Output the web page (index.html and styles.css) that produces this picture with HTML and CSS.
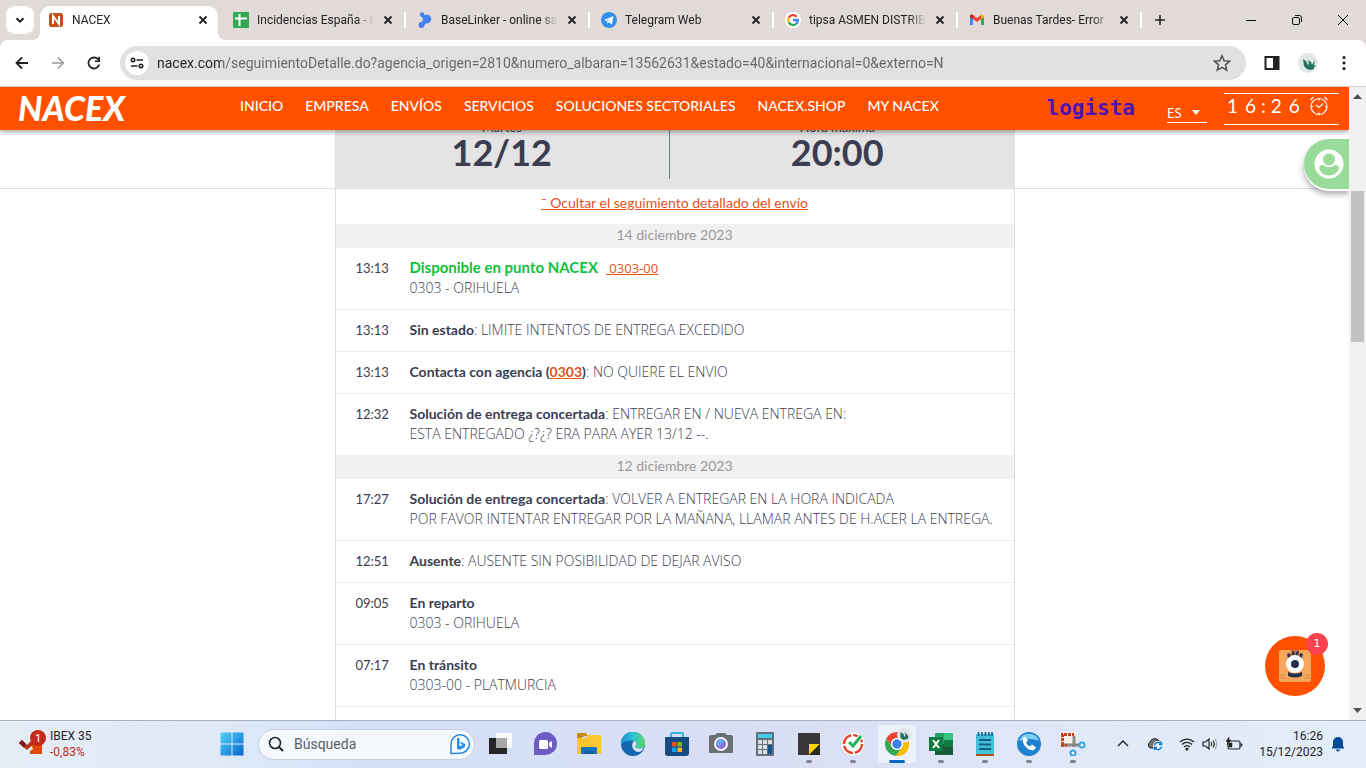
FILE: index.html
```html
<!DOCTYPE html>
<html lang="es">
<head>
<meta charset="utf-8">
<title>NACEX</title>
<link rel="stylesheet" href="styles.css">
</head>
<body>
<header class="tabstrip">
  <button class="tab-search" aria-label="Buscar pestañas"><svg width="12" height="12" viewBox="0 0 12 12"><path d="M2.5 4.2 6 7.7l3.500-3.500" fill="none" stroke="#222" stroke-width="2"/></svg></button>
  <div class="tab active">
    <svg width="16" height="16" viewBox="0 0 16 16"><rect x="1" y="1" width="14" height="14" rx="2.500" fill="#c8511b"/><path d="M5 12V4l6 8V4" fill="none" stroke="#fff" stroke-width="2"/></svg>
    <span class="tab-title">NACEX</span>
    <button class="x" aria-label="Cerrar"><svg width="10" height="10" viewBox="0 0 10 10"><path d="M1.500 1.500l7 7m0-7l-7 7"/></svg></button>
  </div>
  <div class="tab">
    <svg width="16" height="16" viewBox="0 0 16 16"><rect width="16" height="16" rx="1" fill="#34a853"/><path d="M2 6.500h12M6.500 2v12" stroke="#fff" stroke-width="2"/></svg>
    <span class="tab-title">Incidencias España - H</span>
    <button class="x" aria-label="Cerrar"><svg width="10" height="10" viewBox="0 0 10 10"><path d="M1.500 1.500l7 7m0-7l-7 7"/></svg></button>
  </div>
  <div class="tab">
    <svg width="16" height="16" viewBox="0 0 16 16" fill="#4381f0"><circle cx="5" cy="2.500" r="2.200"/><circle cx="10" cy="7" r="4.300"/><circle cx="4.500" cy="13" r="2.900"/><path d="M3.500 3.500 8 9l2-4-4-3zM3 11l5-4 3 3-5 4z"/></svg>
    <span class="tab-title">BaseLinker - online sa</span>
    <button class="x" aria-label="Cerrar"><svg width="10" height="10" viewBox="0 0 10 10"><path d="M1.500 1.500l7 7m0-7l-7 7"/></svg></button>
  </div>
  <div class="tab">
    <svg width="16" height="16" viewBox="0 0 16 16"><circle cx="8" cy="8" r="8" fill="#3390ec"/><path d="M3 8l9.500-4-1.600 8.500-3-2.200-1.500 1.500-.2-2.500L10.500 6 5.500 9z" fill="#fff"/></svg>
    <span class="tab-title">Telegram Web</span>
    <button class="x" aria-label="Cerrar"><svg width="10" height="10" viewBox="0 0 10 10"><path d="M1.500 1.500l7 7m0-7l-7 7"/></svg></button>
  </div>
  <div class="tab">
    <svg width="16" height="16" viewBox="0 0 16 16"><circle cx="8" cy="8" r="8" fill="#fff"/><g fill="none" stroke-width="2.400"><path d="M11.700 4.700A5 5 0 0 0 3.700 5.600" stroke="#ea4335"/><path d="M3.700 5.500a5 5 0 0 0 0 5" stroke="#fbbc05"/><path d="M3.700 10.400a5 5 0 0 0 7.500 1.500" stroke="#34a853"/><path d="M11.200 11.900A4.700 4.700 0 0 0 12.900 8H8" stroke="#4285f4"/></g></svg>
    <span class="tab-title">tipsa ASMEN DISTRIB</span>
    <button class="x" aria-label="Cerrar"><svg width="10" height="10" viewBox="0 0 10 10"><path d="M1.500 1.500l7 7m0-7l-7 7"/></svg></button>
  </div>
  <div class="tab">
    <svg width="16" height="16" viewBox="0 0 16 16"><path d="M1 4v9h3V7z" fill="#4285f4"/><path d="M15 4v9h-3V7z" fill="#34a853"/><path d="M1 4.500C1 2.500 3 2.200 4 3l4 3 4-3v4L8 10 4 7 1 5z" fill="#ea4335"/><path d="M12 3c1-.8 3-.5 3 1.500V5l-3 2.200z" fill="#fbbc04"/><path d="M1 4.500C1 3 2.500 2.300 4 3v4L1 5z" fill="#c5221f"/></svg>
    <span class="tab-title">Buenas Tardes- Error</span>
    <button class="x" aria-label="Cerrar"><svg width="10" height="10" viewBox="0 0 10 10"><path d="M1.500 1.500l7 7m0-7l-7 7"/></svg></button>
  </div>
  <button class="new-tab" aria-label="Nueva pestaña"><svg width="12" height="12" viewBox="0 0 12 12"><path d="M6 1v10M1 6h10" stroke="#222" stroke-width="1.600"/></svg></button>
  <div class="window-controls">
    <button aria-label="Minimizar"><svg width="12" height="12" viewBox="0 0 12 12"><path d="M1 6.500h10"/></svg></button>
    <button aria-label="Restaurar"><svg width="12" height="12" viewBox="0 0 12 12"><rect x="1.500" y="3.500" width="7" height="7" rx="1.500"/><path d="M4 1.500h4.500a2 2 0 0 1 2 2V8"/></svg></button>
    <button aria-label="Cerrar ventana"><svg width="12" height="12" viewBox="0 0 12 12"><path d="M1 1l10 10M11 1L1 11"/></svg></button>
  </div>
</header>
<div class="toolbar-back">
<div class="toolbar">
  <button class="tool" aria-label="Atrás"><svg width="14" height="14" viewBox="0 0 14 14"><path d="M13 7H2M7 1.500 1.500 7 7 12.500" fill="none" stroke="#222" stroke-width="1.800"/></svg></button>
  <button class="tool" aria-label="Adelante"><svg width="14" height="14" viewBox="0 0 14 14"><path d="M1 7h11M7 1.500 12.500 7 7 12.500" fill="none" stroke="#999" stroke-width="1.500"/></svg></button>
  <button class="tool" aria-label="Recargar"><svg width="14" height="14" viewBox="0 0 14 14"><path d="M12.300 8.500A5.500 5.500 0 1 1 11 3.200L12 4.500" fill="none" stroke="#222" stroke-width="1.800"/><path d="M13 .8V6H7.800V4.500h3.500V.8z" fill="#222"/></svg></button>
  <div class="omnibox">
    <button class="site-info" aria-label="Información del sitio"><svg width="14" height="12" viewBox="0 0 14 12" fill="none" stroke="#222" stroke-width="1.600"><circle cx="3" cy="3" r="1.700"/><path d="M6.500 3H13M1 9h6.500"/><circle cx="11" cy="9" r="1.700"/></svg></button>
    <input class="url" type="text" aria-label="Dirección" value="nacex.com/seguimientoDetalle.do?agencia_origen=2810&amp;numero_albaran=13562631&amp;estado=40&amp;internacional=0&amp;externo=N">
    <button class="star" aria-label="Añadir a marcadores"><svg width="18" height="18" viewBox="0 0 16 16"><path d="M8 1.500 9.900 6l4.900.4-3.700 3.200 1.100 4.800L8 11.900l-4.200 2.500 1.100-4.800L1.200 6.400 6.100 6z" fill="none" stroke="#555" stroke-width="1.400"/></svg></button>
  </div>
  <button class="tool-right" aria-label="Panel lateral"><svg width="16" height="16" viewBox="0 0 16 16"><rect x="1.500" y="2" width="13" height="12" fill="none" stroke="#222" stroke-width="2"/><path d="M9 2h6v12H9z" fill="#222"/></svg></button>
  <button class="tool-right" aria-label="Perfil"><svg width="20" height="20" viewBox="0 0 20 20"><circle cx="10" cy="10" r="10" fill="#e1e6e6"/><path d="M5 6l3 2 2 4 1-1-1-4 3 2 1 3 3-5-1 5 2 1-2 1v2l-4 1-3-1-3-3z" fill="#24705a"/></svg></button>
  <button class="tool-right" aria-label="Menú"><svg width="4" height="16" viewBox="0 0 4 16" fill="#222"><circle cx="2" cy="2.500" r="1.600"/><circle cx="2" cy="8" r="1.600"/><circle cx="2" cy="13.500" r="1.600"/></svg></button>
</div>
</div>
<div class="viewport">
  <div class="page">
    <header class="site-header">
      <a class="brand" href="#">NACEX</a>
      <nav class="nav">
        <a href="#">INICIO</a><a href="#">EMPRESA</a><a href="#">ENVÍOS</a><a href="#">SERVICIOS</a><a href="#">SOLUCIONES SECTORIALES</a><a href="#">NACEX.SHOP</a><a href="#">MY NACEX</a>
      </nav>
      <a class="logista" href="#">logista</a>
      <div class="lang">
        <select aria-label="Idioma"><option>ES</option></select>
        <svg width="8" height="5" viewBox="0 0 8 5"><path d="M0 0h8L4 5z" fill="#fff"/></svg>
      </div>
      <div class="clock">
        <span>1</span><span>6</span><span class="colon">:</span><span>2</span><span>6</span>
        <svg width="20" height="20" viewBox="0 0 20 20" fill="none" stroke="#fff" stroke-width="1.200"><circle cx="10" cy="10.500" r="8"/><path d="M7 9l3 2.500 4-4M10 2.500v2M10 16.500v2M2 10.500h2M16 10.500h2M1.500 4 4.500 1M18.500 4l-3-3"/></svg>
      </div>
    </header>
    <main class="main">
      <div class="band">
        <section class="summary">
          <div class="figure"><p>Martes</p><strong>12/12</strong></div>
          <div class="figure"><p>Hora máxima</p><strong>20:00</strong></div>
        </section>
      </div>
      <section class="tracking">
        <p class="toggle"><a href="#">ˉ Ocultar el seguimiento detallado del envío</a></p>
        <table>
          <colgroup><col class="time-col"><col></colgroup>
          <tr class="date"><th colspan="2">14 diciembre 2023</th></tr>
          <tr><td class="time">13:13</td><td><b class="ok">Disponible en punto NACEX</b><a class="point" href="#">&nbsp;0303-00</a><br>0303 - ORIHUELA</td></tr>
          <tr><td class="time">13:13</td><td><b>Sin estado</b>: LIMITE INTENTOS DE ENTREGA EXCEDIDO</td></tr>
          <tr><td class="time">13:13</td><td><b>Contacta con agencia (<a href="#">0303</a>)</b>: NO QUIERE EL ENVIO</td></tr>
          <tr class="last"><td class="time">12:32</td><td><b>Solución de entrega concertada</b>: ENTREGAR EN / NUEVA ENTREGA EN:<br>ESTA ENTREGADO ¿?¿? ERA PARA AYER 13/12 --.</td></tr>
          <tr class="date"><th colspan="2">12 diciembre 2023</th></tr>
          <tr><td class="time">17:27</td><td><b>Solución de entrega concertada</b>: VOLVER A ENTREGAR EN LA HORA INDICADA<br>POR FAVOR INTENTAR ENTREGAR POR LA MAÑANA, LLAMAR ANTES DE H.ACER LA ENTREGA.</td></tr>
          <tr><td class="time">12:51</td><td><b>Ausente</b>: AUSENTE SIN POSIBILIDAD DE DEJAR AVISO</td></tr>
          <tr><td class="time">09:05</td><td><b>En reparto</b><br>0303 - ORIHUELA</td></tr>
          <tr><td class="time">07:17</td><td><b>En tránsito</b><br>0303-00 - PLATMURCIA</td></tr>
        </table>
      </section>
    </main>
    <button class="account" aria-label="Mi cuenta"><svg width="30" height="30" viewBox="0 0 30 30"><circle cx="15" cy="15" r="14.500" fill="#fff"/><circle cx="15" cy="10.500" r="6" fill="#99dc99"/><path d="M5 18.500c2-3 4-2.500 5-2 3 2 7 2 10 0 1-.5 3-1 5 2-1 5-5 8-10 8s-9-3-10-8z" fill="#99dc99"/></svg></button>
    <button class="chat" aria-label="Chat">
      <svg width="34" height="34" viewBox="0 0 34 34"><rect x="1" y="1" width="32" height="32" rx="2" fill="#f6a75b"/><path d="M13 1h8v7h-8z" fill="#b9783a"/><path d="M9 5l3-1 1 4-3 1zM14 3l2-1 1 4h-3zM18 3l3-1-1 4h-2zM22 4l3 1-1 4-3-1z" fill="#34344e"/><circle cx="17" cy="15" r="9" fill="#fff"/><circle cx="17" cy="15" r="4" fill="#27304a"/><path d="M10 23q7 3 14 0v4q-7 3-14 0z" fill="#27304a"/><path d="M2 26h5M2 29h6M27 26h5M26 29h6" stroke="#d28a4a"/></svg>
      <span class="count">1</span>
    </button>
  </div>
  <div class="scrollbar">
    <svg width="9" height="5" viewBox="0 0 9 5"><path d="M0 5h9L4.500 0z" fill="#505050"/></svg>
    <div class="track"><div class="thumb"></div></div>
    <svg width="9" height="5" viewBox="0 0 9 5"><path d="M0 0h9L4.500 5z" fill="#505050"/></svg>
  </div>
</div>
<footer class="taskbar">
  <button class="widget">
    <svg width="28" height="28" viewBox="0 0 28 28"><path d="M12 12h12v12H12v-3l3-2z" fill="#e14a05"/><path d="M1 13l3-3 5 5 8-8 2 4-10 9z" fill="#b8330f"/><path d="M1 13l3-3 4 4-2 4z" fill="#7c1b12"/><circle cx="20" cy="8" r="8" fill="#c42b1c"/><text x="20" y="12" text-anchor="middle" font-size="11" fill="#fff">1</text></svg>
    <span class="quote"><span>IBEX 35</span><span class="down">-0,83%</span></span>
  </button>
  <div class="apps">
    <button class="app start" aria-label="Inicio"><svg width="24" height="24" viewBox="0 0 24 24"><defs><linearGradient id="w" x1="0" y1="0" x2="1" y2="1"><stop offset="0" stop-color="#58cffb"/><stop offset="1" stop-color="#0467cb"/></linearGradient></defs><path d="M.5.5h11v11H.5zM12.500.5h11v11h-11zM.5 12.500h11v11H.5zM12.500 12.500h11v11h-11z" fill="url(#w)"/></svg></button>
    <label class="search">
      <svg width="16" height="16" viewBox="0 0 16 16" fill="none" stroke="#222"><circle cx="7" cy="7" r="5.500" stroke-width="1.600"/><path d="M11 11l4 4" stroke-width="2"/></svg>
      <input type="text" placeholder="Búsqueda" aria-label="Búsqueda">
      <svg width="22" height="22" viewBox="0 0 22 22"><path d="M2 20.500V11a9.200 9.200 0 1 1 9 9.200z" fill="#f8fcff" stroke="#2a86dd" stroke-width="1.500"/><path d="M8 4.500l2.500 1v8l3-1.500-1.500-1-.8-2.500 4.800 2.500v3L10.500 17 8 15.500z" fill="#2590ea"/></svg>
    </label>
    <button class="app" aria-label="Vista de tareas"><svg width="24" height="24" viewBox="0 0 24 24"><rect x="0" y="6" width="18" height="16" fill="#262626"/><rect x="7" y="1" width="16" height="15" fill="#fafafa"/><rect x="7" y="6" width="11" height="10" fill="#a8a8a8"/></svg></button>
    <button class="app" aria-label="Chat de Teams"><svg width="24" height="24" viewBox="0 0 24 24"><path d="M1 23V12A11.500 11.500 0 1 1 12 23z" fill="#6a5cc2"/><rect x="6" y="8" width="9" height="9" rx="1.500" fill="#fff"/><path d="M16 11l3-2v7l-3-2z" fill="#fff"/></svg></button>
    <button class="app" aria-label="Explorador"><svg width="24" height="24" viewBox="0 0 24 24"><path d="M0 2q0-1 1-1h8l2 3h-3l-8 4z" fill="#c98a10"/><path d="M0 6h9l2-3h12q1 0 1 1v18H0z" fill="#fbc62e"/><path d="M4 22v-6q0-1 1-1h14q1 0 1 1v6z" fill="#1474bd"/><path d="M7 19h10v3H7z" fill="#0d5f9f"/></svg></button>
    <button class="app" aria-label="Edge"><svg width="24" height="24" viewBox="0 0 24 24"><defs><linearGradient id="e" x1="0" y1="0" x2="1" y2="0"><stop offset="0" stop-color="#1d8fd8"/><stop offset=".5" stop-color="#2fc0d8"/><stop offset="1" stop-color="#61d960"/></linearGradient></defs><circle cx="12" cy="12" r="12" fill="#1464ae"/><path d="M0 12a12 12 0 0 1 24-1c0 4-3 5.500-6 5.500-3 0-4-1-4-2 2-2 1-6-4-6-5 0-10 3-10 5z" fill="url(#e)"/><path d="M13 9c3 1 3 4 1 5.500 0 2 5 3 9 .5-1 3-3 5-6 5-5-1-8-7-4-11z" fill="#dbe1f4"/></svg></button>
    <button class="app" aria-label="Microsoft Store"><svg width="24" height="24" viewBox="0 0 24 24"><path d="M6 6V2q0-1 1-1h10q1 0 1 1v4" fill="none" stroke="#2fb3e8" stroke-width="2"/><path d="M0 5h24v16q0 3-3 3H3q-3 0-3-3z" fill="#174a83"/><path d="M7 10h4.500v4.500H7z" fill="#f25022"/><path d="M12.500 10H17v4.500h-4.500z" fill="#7fba00"/><path d="M7 15.500h4.500V20H7z" fill="#00a4ef"/><path d="M12.500 15.500H17V20h-4.500z" fill="#ffb900"/></svg></button>
    <button class="app" aria-label="Cámara"><svg width="24" height="24" viewBox="0 0 24 24"><path d="M0 5q0-2 2-2h4l2-2h8l2 2h4q2 0 2 2v15q0 1-1 1H1q-1 0-1-1z" fill="#6b6e73"/><circle cx="12" cy="12" r="7" fill="#f5f5fa"/><circle cx="12" cy="12" r="5" fill="#876fdc"/><path d="M8 12a4 4 0 0 1 7-3l-5 6z" fill="#5eb2f2"/></svg></button>
    <button class="app" aria-label="Calculadora"><svg width="24" height="24" viewBox="0 0 24 24"><rect x="3" width="18" height="24" rx="1" fill="#62717c"/><rect x="5" y="2" width="14" height="4" fill="#43c8ee"/><path d="M5 8h4v4H5zM10 8h4v4h-4zM15 8h4v4h-4zM5 13h4v4H5zM10 13h4v4h-4zM5 18h4v4H5zM10 18h4v4h-4z" fill="#d9dde0"/><path d="M15 13h4v9h-4z" fill="#174f91"/></svg></button>
    <button class="app open" aria-label="Notas rápidas"><svg width="24" height="24" viewBox="0 0 24 24"><rect x="1" y="1" width="22" height="22" rx="1" fill="#383838"/><path d="M12 12h11L12 23z" fill="#ffd500"/><path d="M23 12v11H12z" fill="#282828"/></svg></button>
    <button class="app open" aria-label="Tareas"><svg width="24" height="24" viewBox="0 0 24 24"><circle cx="12" cy="12" r="11.500" fill="#fff"/><circle cx="12" cy="12" r="9" fill="none" stroke="#e4472e" stroke-width="2.600" stroke-dasharray="12.100 2"/><path d="M8 10l4 4 8-10" fill="none" stroke="#fff" stroke-width="5"/><path d="M8 10l4 4 8-10" fill="none" stroke="#24b45e" stroke-width="3"/></svg></button>
    <button class="app open current" aria-label="Chrome"><svg width="30" height="30" viewBox="0 0 30 30"><path d="M4.600 11a12 12 0 0 1 20.800 0H15a6 6 0 0 0-5.200 9z" fill="#ea4335"/><path d="M4.600 11l5.200 9A6 6 0 0 0 15 23l-3 5.600A12 12 0 0 1 4.600 11z" fill="#34a853"/><path d="M25.400 11A12 12 0 0 1 14 29l6.200-9A6 6 0 0 0 15 11z" fill="#fbbc04"/><path d="M9.800 20 15 23l5.200-3L14 29l-2-.4z" fill="#34a853"/><path d="M20.200 20 14 29A12 12 0 0 0 25.400 11z" fill="#fbbc04"/><circle cx="15" cy="17" r="6" fill="#fff"/><circle cx="15" cy="17" r="4.700" fill="#397ff0"/><circle cx="22.500" cy="8" r="7.500" fill="#e1e6e6"/><path d="M18.500 5l3 2 1 3 1-1-1-4 3 3 1 2-1 2-4 1-3-2z" fill="#24705a"/></svg></button>
    <button class="app open" aria-label="Excel"><svg width="24" height="24" viewBox="0 0 24 24"><path d="M6 1h9v22H6z" fill="#21a366"/><path d="M15 1h9v7h-9z" fill="#33c481"/><path d="M15 8h9v7h-9z" fill="#107c41"/><path d="M6 12h9v11H6zM15 15h9v8h-9z" fill="#185c37"/><rect y="5" width="14" height="14" fill="#107c41"/><path d="M4 8l6 8m0-8l-6 8" stroke="#fff" stroke-width="2"/></svg></button>
    <button class="app open" aria-label="Bloc de notas"><svg width="24" height="24" viewBox="0 0 24 24"><rect x="3" y="2" width="18" height="20" rx="1" fill="#43bfdc"/><path d="M3 22h18v2H3z" fill="#a5561e"/><path d="M5.500 0v4M9 0v4M12.500 0v4M16 0v4M19 0v4" stroke="#175b85" stroke-width="1.600"/><path d="M6 8h12M6 12.500h12M6 17h12" stroke="#13637f" stroke-width="2"/></svg></button>
    <button class="app open" aria-label="Teléfono"><svg width="24" height="24" viewBox="0 0 24 24"><circle cx="12" cy="12" r="12" fill="#1c82cf"/><path d="M2 9a10.500 10.500 0 0 1 20 0q-10-4-20 0z" fill="#7dccf2"/><path d="M6 6l2-1.500 3 4-2 2q1 3 4 4l2-2 4 3-2 2.500c-5 2-13-6-11-12z" fill="#fff"/></svg></button>
    <button class="app open" aria-label="Recortes"><svg width="28" height="24" viewBox="0 0 28 24"><rect x="1" width="17" height="15" fill="#f7eeea"/><path d="M3.500 13V2.500H15" fill="none" stroke="#c8401b" stroke-width="3" stroke-dasharray="3 1"/><path d="M15 4v11M3 13h17" stroke="#888" stroke-width="3"/><path d="M2 13.200h6" stroke="#c8401b" stroke-width="3" stroke-dasharray="3 1"/><g fill="#fff" stroke="#35a7e6" stroke-width="2"><circle cx="23" cy="13" r="2.500"/><circle cx="14" cy="21" r="2.500"/></g></svg></button>
  </div>
  <div class="tray">
    <button aria-label="Iconos ocultos"><svg width="12" height="12" viewBox="0 0 12 12"><path d="M1 8l5-5 5 5" fill="none" stroke="#222" stroke-width="1.400"/></svg></button>
    <button class="cloud" aria-label="OneDrive"><svg width="18" height="14" viewBox="0 0 18 14"><path d="M4 11a3.500 3.500 0 0 1 0-6 5 5 0 0 1 9-1q3 0 3 4l-3 3z" fill="#777" stroke="#222"/><circle cx="12" cy="9" r="5" fill="#e5f0fa"/><path d="M8.500 8.500a3.500 3.500 0 0 1 6-2m1-1.500v2.500H13m2.500 2a3.500 3.500 0 0 1-6 2m-1 1.500v-2.500H11" fill="none" stroke="#0078d4" stroke-width="1.300"/></svg></button>
    <button aria-label="Red, sonido y batería" class="status">
      <svg width="16" height="14" viewBox="0 0 16 14" fill="none" stroke="#222" stroke-width="1.200"><path d="M1 5a10 10 0 0 1 14 0M3 7.500a7 7 0 0 1 10 0M5 10a4 4 0 0 1 6 0"/><circle cx="8" cy="12" r="1" fill="#222"/></svg>
      <svg width="16" height="14" viewBox="0 0 16 14" fill="none" stroke="#222" stroke-width="1.200"><path d="M1 5h2.500L7 2v10L3.500 9H1zM9 5q1.500 2 0 4M11 3.500q2.500 3.500 0 7"/><path d="M13 2q3.500 5 0 10" stroke="#aaa"/></svg>
      <svg width="18" height="14" viewBox="0 0 18 14" fill="none" stroke="#222" stroke-width="1.200"><rect x="3" y="4" width="12" height="8" rx="1.500"/><path d="M16.500 6.500v3" stroke-width="1.600"/><path d="M4 6h3v4H4zM4 0 1 4.500h2L2 8l4-5H4z" fill="#222" stroke-width=".5"/></svg>
    </button>
    <button class="datetime"><span>16:26</span><span>15/12/2023</span></button>
    <button aria-label="Notificaciones"><svg width="14" height="16" viewBox="0 0 14 16" fill="#004a96"><path d="M7 1a5 5 0 0 1 5 5v4l1.500 2.500H.5L2 10V6a5 5 0 0 1 5-5zM5 13.500h4a2 2 0 0 1-4 0z"/></svg></button>
  </div>
</footer>
</body>
</html>
```
FILE: styles.css
```css
* { box-sizing: border-box; }
body {
  margin: 0;
  height: 100vh;
  display: flex;
  flex-direction: column;
  overflow: hidden;
  font-family: Roboto, "Noto Sans", sans-serif;
  font-size: 12px;
  color: #222;
  background: #fff;
}
button {
  font: inherit;
  color: inherit;
  background: none;
  border: 0;
  padding: 0;
  display: flex;
  align-items: center;
  justify-content: center;
}
svg { display: block; flex: none; }
p { margin: 0; }

/* Tab strip */
.tabstrip {
  flex: none;
  height: 40px;
  display: flex;
  padding: 6px 0 0 6px;
  background: #e2dad8;
}
.tab-search {
  flex: none;
  width: 28px;
  height: 28px;
  border-radius: 9px;
  background: #fff;
  margin-right: 6px;
}
.tab {
  position: relative;
  flex: none;
  width: 184px;
  height: 28px;
  display: flex;
  align-items: center;
  gap: 8px;
  padding: 0 12px 0 11px;
}
.tab:not(.active)::after {
  content: "";
  position: absolute;
  right: 0;
  top: 6px;
  width: 2px;
  height: 16px;
  background: #fff;
}
.tab.active {
  width: 178px;
  height: 34px;
  margin-right: 4px;
  padding: 0 9px 6px 8px;
  background: #fff;
  border-radius: 10px 10px 0 0;
}
.tab.active::before,
.tab.active::after {
  content: "";
  position: absolute;
  bottom: 0;
  width: 8px;
  height: 8px;
}
.tab.active::before { left: -8px; background: radial-gradient(circle at 0 0, transparent 8px, #fff 8px); }
.tab.active::after { right: -8px; background: radial-gradient(circle at 100% 0, transparent 8px, #fff 8px); }
.tab-title {
  flex: 1;
  min-width: 0;
  overflow: hidden;
  white-space: nowrap;
  mask-image: linear-gradient(to right, #000 85%, transparent);
}
.x { width: 12px; height: 16px; }
.x svg { stroke: #222; stroke-width: 1.800; }
.new-tab { width: 36px; height: 28px; }
.window-controls { display: flex; margin-left: auto; }
.window-controls button { width: 46px; height: 28px; }
.window-controls svg { fill: none; stroke: #111; }

/* Toolbar */
.toolbar-back { flex: none; background: #e2dad8; }
.toolbar {
  height: 47px;
  display: flex;
  align-items: center;
  padding: 0 12px 0 4px;
  background: #fff;
  border-radius: 8px 8px 0 0;
  border-bottom: 1px solid #d5cfcc;
}
.tool { width: 36px; height: 34px; }
.omnibox {
  flex: 1;
  height: 34px;
  margin: 0 8px;
  display: flex;
  align-items: center;
  padding: 0 15px 0 5px;
  border-radius: 17px;
  background: #e0e1e0;
}
.site-info { width: 24px; height: 24px; border-radius: 12px; background: #fff; }
.url {
  flex: 1;
  border: 0;
  padding: 0 0 0 8px;
  font: 14px Roboto, sans-serif;
  color: transparent;
  background: linear-gradient(to right, #222 72px, #63676a 72px);
  background-clip: text;
}
.tool-right { width: 36px; height: 34px; }
.tool-right:last-child { width: 20px; margin-left: 8px; }

/* Page */
.viewport { flex: 1; min-height: 0; display: flex; }
.page {
  position: relative;
  flex: 1;
  overflow: hidden;
  font-family: Lato, sans-serif;
  font-size: 14px;
  color: #3c3c50;
}
.site-header {
  position: relative;
  z-index: 2;
  height: 43px;
  display: flex;
  align-items: center;
  padding: 0 10px 0 18px;
  background: #ff5000;
  color: #fff;
  box-shadow: 0 2px 5px rgba(0, 0, 0, .35);
}
.site-header a { color: inherit; text-decoration: none; }
.brand { width: 222px; padding-bottom: 2px; font-size: 34px; line-height: 40px; font-weight: 900; font-style: italic; }
.nav { display: flex; gap: 22px; padding-bottom: 6px; white-space: nowrap; font-weight: 500; }
.site-header .logista {
  margin-left: auto;
  padding-bottom: 2px;
  font-family: "DejaVu Sans Mono", monospace;
  font-size: 21px;
  font-weight: bold;
  color: #4b12b8;
}
.lang {
  width: 40px;
  margin: 9px 17px 0 32px;
  display: flex;
  align-items: center;
  gap: 8px;
  border-bottom: 1px solid #fff;
}
.lang select {
  appearance: none;
  width: 17px;
  padding: 0;
  border: 0;
  background: none;
  color: #fff;
  font: 13px/18px Lato, sans-serif;
}
.clock {
  height: 32px;
  width: 115px;
  display: flex;
  align-items: center;
  gap: 7px;
  padding: 0 0 6px 3px;
  border: solid #fff;
  border-width: 1px 0;
  font-size: 19px;
}
.clock .colon { margin: 0 -2px; }
.clock svg { margin-left: 2px; }
.band { border-bottom: 1px solid #ddd; }
.summary {
  width: 680px;
  max-width: 100%;
  margin: -11px auto 0;
  padding: 0 10px 9px 0;
  display: flex;
  background: #e4e4e4;
}
.figure { flex: 1; height: 60px; text-align: center; line-height: 16px; }
.figure p { font-size: 13px; }
.figure + .figure { border-left: 1px solid #6b8088; }
.figure strong { display: block; font-size: 36px; line-height: 34px; }
.tracking {
  width: 680px;
  max-width: 100%;
  margin: 0 auto;
  border: solid #ddd;
  border-width: 0 1px;
  height: 100vh;
}
.toggle { text-align: center; line-height: 20px; padding: 4px 0 11px; }
.tracking a { color: #e2531c; }
table { width: 100%; table-layout: fixed; border-spacing: 0; line-height: 20px; }
.time-col { width: 74px; }
th { height: 24px; padding: 0 0 2px; background: #f1f1f1; color: #999; font-weight: 400; line-height: 22px; }
td {
  padding: 10px 0 11px;
  border-bottom: 1px solid #eee;
  vertical-align: top;
  white-space: nowrap;
  font-family: "Open Sans", sans-serif;
  font-weight: 300;
}
.last td { border-bottom: 0; }
td.time { padding-left: 20px; font: 13px/20px Lato, sans-serif; }
td b { font: bold 14px/16px Lato, sans-serif; }
td .ok { color: #10c040; font-size: 15px; }
td .point { margin-left: 8px; font: 13px/16px "Open Sans", sans-serif; }
.account {
  position: absolute;
  right: 0;
  top: 52px;
  width: 45px;
  height: 50px;
  border-radius: 25px 0 0 25px;
  background: #99dc99;
  box-shadow: 0 2px 0 #fff, 0 5px 6px rgba(0, 0, 0, .35);
  padding-left: 4px;
}
.chat {
  position: absolute;
  right: 24px;
  bottom: 24px;
  width: 60px;
  height: 60px;
  border-radius: 30px;
  background: #ff5000;
}
.count {
  position: absolute;
  right: -3px;
  top: -3px;
  width: 22px;
  height: 22px;
  border-radius: 11px;
  background: #fc424f;
  color: #fff;
  font: 11px/22px "DejaVu Sans", sans-serif;
}
.scrollbar {
  width: 17px;
  display: flex;
  flex-direction: column;
  align-items: center;
  padding: 7px 0;
  background: #f1f1f1;
}
.track { flex: 1; padding-top: 92px; }
.thumb { width: 13px; height: 151px; background: #c1c1c1; }

/* Taskbar */
.taskbar {
  flex: none;
  height: 48px;
  display: flex;
  align-items: center;
  padding-bottom: 1px;
  border-top: 1px solid #a9b1bf;
  background: linear-gradient(to right, #e4edf6, #e0eaf7 15%, #d3e0f8 27%, #dadff4 60%, #e0e9f8 80%, #e3eef9);
}
.widget { width: 198px; padding-left: 18px; gap: 4px; justify-content: flex-start; line-height: 16px; }
.quote { display: flex; flex-direction: column; text-align: left; }
.down { color: #c42b1c; }
.apps { display: flex; align-items: center; }
.app { position: relative; width: 38px; height: 38px; margin: 0 3px; border-radius: 4px; }
.app.start { margin: 0 7px 0 15px; }
.search {
  width: 217px;
  height: 31px;
  margin-right: 4px;
  display: flex;
  align-items: center;
  gap: 10px;
  padding: 0 3px 0 9px;
  border: 1px solid #c7cfdf;
  border-radius: 16px;
  background: #f4f8fd;
}
.search input {
  flex: 1;
  min-width: 0;
  padding: 0;
  border: 0;
  background: none;
  font: 14px Roboto, sans-serif;
}
.search input::placeholder { color: #5c5f64; }
.app.open::after {
  content: "";
  position: absolute;
  bottom: 0;
  left: 16px;
  width: 6px;
  height: 3px;
  border-radius: 2px;
  background: #80838e;
}
.app.current { background: #edf1fb; }
.app.current svg { margin-bottom: 4px; }
.app.current::after { left: 11px; width: 16px; background: #0067c0; }
.tray { display: flex; align-items: center; margin-left: auto; padding-right: 21px; }
.cloud { margin: 0 15px 0 17px; }
.status { gap: 7px; margin-right: 16px; }
.datetime { flex-direction: column; align-items: flex-end; line-height: 16px; margin-right: 8px; }
```
